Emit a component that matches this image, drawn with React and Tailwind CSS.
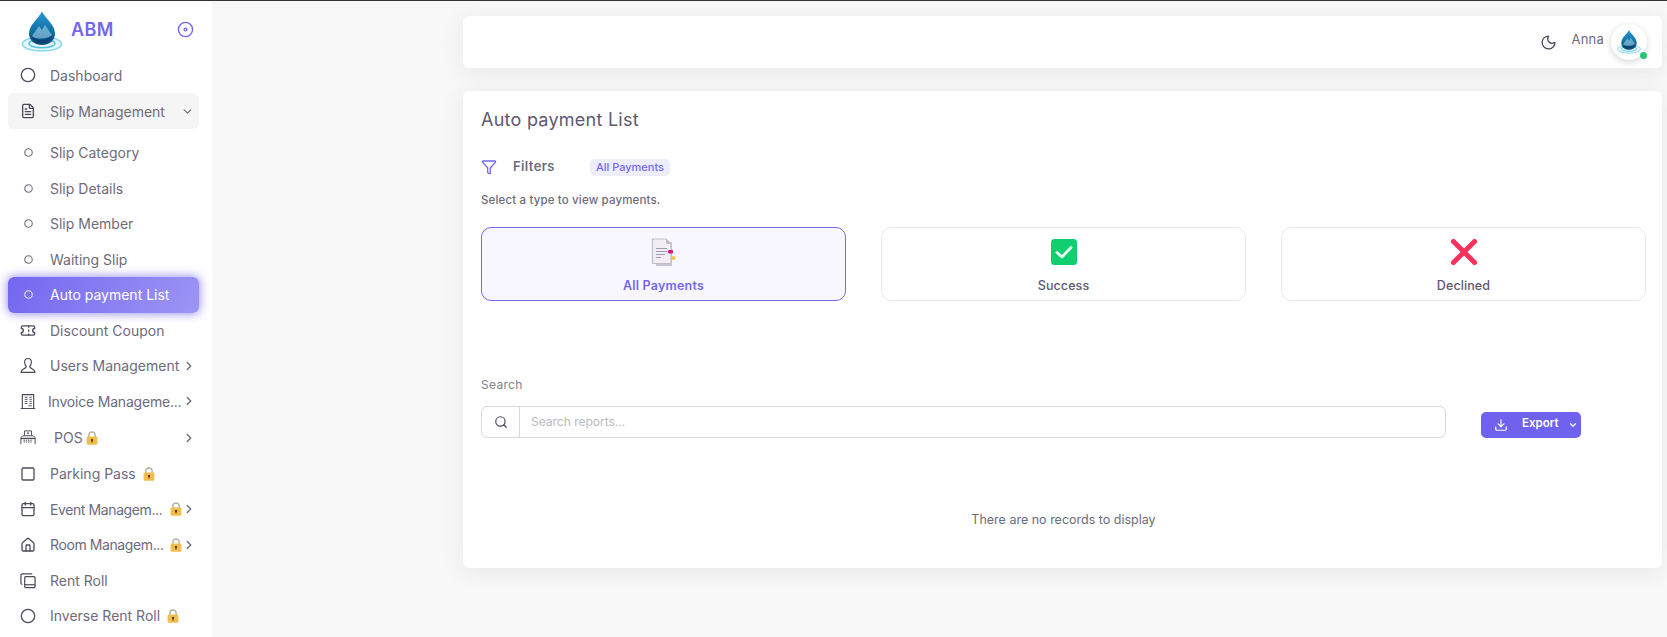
import React from 'react';
import {
  Circle, FileText, ChevronDown, ChevronRight, Disc, Ticket, Square, Calendar, Home,
  Moon, Filter, Search, Download,
} from 'lucide-react';

const Drop = ({ size = 44, id = 'dropFill', className = '' }) => (
  <svg width={size} height={size} viewBox="0 0 44 44" className={className}>
    <defs>
      <linearGradient id={id} x1="0" y1="0" x2="0" y2="1">
        <stop offset="0" stopColor="#2a9bd0" />
        <stop offset="0.6" stopColor="#0f6fa5" />
        <stop offset="1" stopColor="#0b4a7c" />
      </linearGradient>
    </defs>
    <ellipse cx="22" cy="34" rx="19.5" ry="7" fill="#eaf8fd" stroke="#8ad8f2" strokeWidth="1.6" />
    <ellipse cx="22" cy="33.5" rx="13" ry="4.2" fill="none" stroke="#4cc0e8" strokeWidth="1.4" />
    <path d="M22 1.5C18 9 9 15 9 23.5C9 30.5 14.8 35 22 35C29.2 35 35 30.5 35 23.5C35 15 26 9 22 1.5Z" fill={`url(#${id})`} />
    <path d="M12 26L19 16L22 20L25 15L32 25C28 29 17 30 12 26Z" fill="#bfe3f3" opacity="0.5" />
    <path d="M12 27C17 31 28 31 32 26C31 31 26 33 22 33C17 33 13 31 12 27Z" fill="#0b3f6e" />
  </svg>
);

const Lock = ({ className = '' }) => (
  <svg width="12" height="14" viewBox="0 0 11 13" className={`shrink-0 ${className}`}>
    <path d="M2.6 6V3.8a2.9 2.9 0 0 1 5.8 0V6" fill="none" stroke="#b9b2a0" strokeWidth="1.3" />
    <rect x="0.5" y="5.2" width="10" height="7.5" rx="1.4" fill="#f2bd4b" />
    <circle cx="5.5" cy="8.4" r="1.1" fill="#5b4413" />
    <rect x="5" y="8.6" width="1" height="2.2" fill="#5b4413" />
  </svg>
);

const UserIcon = () => (
  <svg width="17" height="17" viewBox="0 0 17 17" fill="none" stroke="#4b4a5c" strokeWidth="1.2" strokeLinejoin="round">
    <path d="M8.5 1C6 1 4.7 3 4.9 5.4C5 7.2 5.8 8.6 6.5 9.3C6.8 10.8 5.6 11.4 3.8 12.2C2 13 1.2 14 1 15.8H16C15.8 14 15 13 13.2 12.2C11.4 11.4 10.2 10.8 10.5 9.3C11.2 8.6 12 7.2 12.1 5.4C12.3 3 11 1 8.5 1Z" />
  </svg>
);

const InvoiceIcon = () => (
  <svg width="17" height="17" viewBox="0 0 17 17" fill="none" stroke="#4b4a5c" strokeWidth="1.2">
    <path d="M2.5 16V1.2H14.5V16M0.8 16H16.2" />
    <path d="M5 4H8M5 6.2H8M5 8.4H8M5 10.6H8M10 4H12.5M10 6.2H12.5M10 8.4H12.5M10 10.6H12.5M9 13H12.5" strokeWidth="1" />
  </svg>
);

const PosIcon = () => (
  <svg width="18" height="18" viewBox="0 0 18 18" fill="none" stroke="#4b4a5c" strokeWidth="1.1">
    <path d="M5 6V1H13V6" />
    <path d="M1 16V8.5L3 6.5H15L17 8.5V16" />
    <path d="M1 9.5H17" strokeWidth="1.5" />
    <path d="M4 11.5H14M4 13.5H14" strokeDasharray="1.5 1" strokeWidth="1.3" />
    <path d="M8 3.5H10M9 2.2V5" strokeWidth="0.9" />
  </svg>
);

const RentIcon = () => (
  <svg width="17" height="17" viewBox="0 0 17 17" fill="none" stroke="#4b4a5c" strokeWidth="1.3" strokeLinejoin="round">
    <path d="M2.5 12.5C1.5 12.5 1 12 1 11V3C1 2 1.5 1.5 2.5 1.5H13" />
    <rect x="5" y="4.5" width="11" height="11.5" rx="1" />
    <path d="M5 13H16" />
  </svg>
);

const Sub = () => <Circle size={9} strokeWidth={1.1} absoluteStrokeWidth className="opacity-80" />;

function Row({ icon, label, after, active, right, className = 'h-[35.5px]', labelClass = 'ml-[14px]' }) {
  return (
    <div
      className={`ml-2 mr-[13px] flex items-center rounded-md pl-[12px] pr-[3px] ${className} ${
        active
          ? 'bg-[linear-gradient(118deg,#7367f0,#9d95f5)] text-white shadow-[0_0_10px_1px_rgba(115,103,240,0.7)]'
          : 'text-[#6e6b7b]'
      }`}
    >
      <span className={`flex w-[16px] shrink-0 justify-center ${active ? 'text-white' : 'text-[#4b4a5c]'}`}>{icon}</span>
      <span className={`whitespace-nowrap text-[14px] ${labelClass}`}>{label}</span>
      {after}
      {right && <span className="ml-auto flex items-center">{right}</span>}
    </div>
  );
}

const Chev = () => <ChevronRight size={14} strokeWidth={1.3} absoluteStrokeWidth className="text-[#6e6b7b]" />;

function Sidebar() {
  return (
    <aside className="w-[212px] shrink-0 bg-white">
      <div className="flex h-[56px] items-center pl-[20px] pr-[16px]">
        <Drop size={44} className="mt-[5px] shrink-0" />
        <span className="ml-[7px] text-[18px] font-semibold tracking-[0.4px] text-[#7367f0]">ABM</span>
        <Disc size={17} strokeWidth={1.4} absoluteStrokeWidth className="ml-auto mr-[2px] text-[#7367f0]" />
      </div>
      <div>
        <Row className="h-[36px]" icon={<Circle size={16} strokeWidth={1.3} absoluteStrokeWidth />} label="Dashboard" />
        <div className="ml-2 mr-[13px] flex h-[36px] items-center rounded-md bg-[#f5f5f5] pl-[12px] pr-[5px] text-[#6e6b7b]">
          <span className="flex w-[16px] shrink-0 justify-center text-[#4b4a5c]"><FileText size={16} strokeWidth={1.3} absoluteStrokeWidth /></span>
          <span className="ml-[14px] whitespace-nowrap text-[14px]">Slip Management</span>
          <ChevronDown size={13} strokeWidth={1.2} absoluteStrokeWidth className="ml-auto" />
        </div>
        <div className="h-[6px]" />
        <Row icon={<Sub />} label="Slip Category" />
        <Row icon={<Sub />} label="Slip Details" />
        <Row icon={<Sub />} label="Slip Member" />
        <Row icon={<Sub />} label="Waiting Slip" />
        <Row active icon={<Sub />} label="Auto payment List" />
        <Row icon={<Ticket size={17} strokeWidth={1.4} absoluteStrokeWidth />} label="Discount Coupon" />
        <Row icon={<UserIcon />} label="Users Management" right={<Chev />} />
        <Row icon={<InvoiceIcon />} label="Invoice Manageme..." labelClass="ml-[12px] tracking-[-0.2px]" right={<Chev />} />
        <Row
          className="h-[37px]"
          icon={<PosIcon />}
          label="POS"
          labelClass="ml-[18px]"
          after={<Lock className="ml-[3px]" />}
          right={<Chev />}
        />
        <Row icon={<Square size={16} strokeWidth={1.3} absoluteStrokeWidth />} label="Parking Pass" after={<Lock className="ml-[7px]" />} />
        <Row icon={<Calendar size={16} strokeWidth={1.3} absoluteStrokeWidth />} label="Event Managem..." labelClass="ml-[14px] tracking-[-0.4px]" after={<Lock className="ml-[8px]" />} right={<Chev />} />
        <Row icon={<Home size={16} strokeWidth={1.3} absoluteStrokeWidth />} label="Room Managem..." labelClass="ml-[14px] tracking-[-0.4px]" after={<Lock className="ml-[6px]" />} right={<Chev />} />
        <Row icon={<RentIcon />} label="Rent Roll" />
        <Row icon={<Circle size={16} strokeWidth={1.3} absoluteStrokeWidth />} label="Inverse Rent Roll" after={<Lock className="ml-[7px]" />} />
      </div>
    </aside>
  );
}

const cardBase = 'flex h-[74px] flex-col items-center rounded-[10px] border pt-[10px]';

function AllIcon() {
  return (
    <svg width="28" height="30" viewBox="0 0 28 30">
      <path d="M6 4H22V28H6Z" fill="#c9c6d3" />
      <path d="M2.5 1H16L21 6V25.5H2.5Z" fill="#f0eef4" stroke="#c0bdc9" strokeWidth="1.2" strokeLinejoin="round" />
      <path d="M16 1V6H21Z" fill="#c0bdc9" />
      <path d="M6 10.5H17M6 13.5H17M6 16.5H15M6 19.5H11" stroke="#9f9cab" strokeWidth="1" />
      <rect x="18" y="12" width="5" height="3.5" rx="1" fill="#d9187f" />
      <circle cx="23.5" cy="20" r="2" fill="#f4c13d" />
    </svg>
  );
}

function App() {
  return (
    <div className="flex h-[637px] w-full overflow-hidden border-t border-[#333] bg-[#f8f8f8] font-['Inter',sans-serif] text-[#6e6b7b]">
      <Sidebar />
      <main className="min-w-0 flex-1 pl-[251px] pr-[5px] pt-[15px]">
        <div className="flex h-[52px] items-center rounded-md bg-white pr-[15px] shadow-[0_4px_24px_0_rgba(34,41,47,0.08)]">
          <Moon size={17} strokeWidth={1.3} absoluteStrokeWidth className="ml-auto text-[#4b4a5c]" />
          <span className="ml-[15px] -mt-[4px] text-[13px] tracking-[0.2px] text-[#6e6b7b]">Anna</span>
          <div className="relative ml-[7px] flex h-[36px] w-[36px] items-center justify-center rounded-full bg-white shadow-[0_2px_6px_rgba(34,41,47,0.2)]">
            <Drop size={26} id="dropFillSmall" />
            <span className="absolute bottom-[1px] right-[0px] h-[7px] w-[7px] rounded-full bg-[#28c76f]" />
          </div>
        </div>

        <section className="mt-[23px] h-[477px] rounded-md bg-white pl-[18px] pr-[16px] pt-[17px] shadow-[0_4px_24px_0_rgba(34,41,47,0.08)]">
          <h1 className="text-[18px] leading-[24px] tracking-[0.25px] text-[#5e5873]">Auto payment List</h1>

          <div className="mt-[26px] flex h-[18px] items-center">
            <Filter size={16} strokeWidth={1.3} absoluteStrokeWidth className="text-[#7367f0]" />
            <span className="ml-[16px] text-[13px] font-semibold tracking-[0.4px] text-[#6e6b7b]">Filters</span>
            <span className="ml-[35px] rounded-[5px] bg-[#eeedfd] px-[6px] py-[1px] text-[11px] font-medium leading-[15px] text-[#7367f0]">All Payments</span>
          </div>

          <p className="mt-[16px] text-[11.5px] font-medium leading-[16px] tracking-[0.15px] text-[#6e6b7b]">Select a type to view payments.</p>

          <div className="mt-[19px] grid grid-cols-3 gap-[35px]">
            <div className={`${cardBase} border-[#7367f0] bg-[#f8f7ff]`}>
              <AllIcon />
              <span className="mt-[9px] text-[12.5px] font-semibold tracking-[0.2px] text-[#7367f0]">All Payments</span>
            </div>
            <div className={`${cardBase} border-[#e8e8ea]`}>
              <svg width="28" height="28" viewBox="0 0 28 28">
                <rect x="1" y="1" width="26" height="26" rx="3.5" fill="#0fcf6f" />
                <path d="M7 14.5L12 19L21 9.5" fill="none" stroke="#eafff2" strokeWidth="2.8" strokeLinecap="round" strokeLinejoin="round" />
              </svg>
              <span className="mt-[11px] text-[12.5px] font-medium tracking-[0.1px] text-[#5e5873]">Success</span>
            </div>
            <div className={`${cardBase} border-[#e8e8ea]`}>
              <svg width="28" height="28" viewBox="0 0 28 28">
                <path d="M3.5 3.5L24.5 24.5M24.5 3.5L3.5 24.5" stroke="#f5325e" strokeWidth="5" strokeLinecap="round" />
              </svg>
              <span className="mt-[11px] text-[12.5px] font-medium tracking-[0.1px] text-[#5e5873]">Declined</span>
            </div>
          </div>

          <label className="mt-[75px] block text-[12px] leading-[18px] tracking-[0.3px] text-[#82808f]">Search</label>

          <div className="mt-[12px] flex items-start">
            <div className="flex h-[32px] w-[965px] rounded-md border border-[#d8d6de]">
              <span className="flex w-[38px] items-center justify-center border-r border-[#d8d6de] text-[#4b4a5c]">
                <Search size={14} strokeWidth={1.2} absoluteStrokeWidth />
              </span>
              <input
                placeholder="Search reports..."
                className="min-w-0 flex-1 bg-transparent pl-[11px] text-[12px] outline-none placeholder:text-[#b9b9c3]"
              />
            </div>
            <button className="ml-[35px] mt-[6px] flex h-[26px] w-[100px] items-center rounded-[5px] bg-[#6f62ee] pl-[13px] text-white">
              <Download size={14} strokeWidth={1.2} absoluteStrokeWidth />
              <span className="ml-[14px] -mt-[2px] text-[11.5px] font-semibold">Export</span>
              <ChevronDown size={10} strokeWidth={1.2} absoluteStrokeWidth className="ml-[9px]" />
            </button>
          </div>

          <p className="mt-[73px] text-center text-[12.5px] leading-[18px] text-[#6e6b7b]">There are no records to display</p>
        </section>
      </main>
    </div>
  );
}

export default App;
